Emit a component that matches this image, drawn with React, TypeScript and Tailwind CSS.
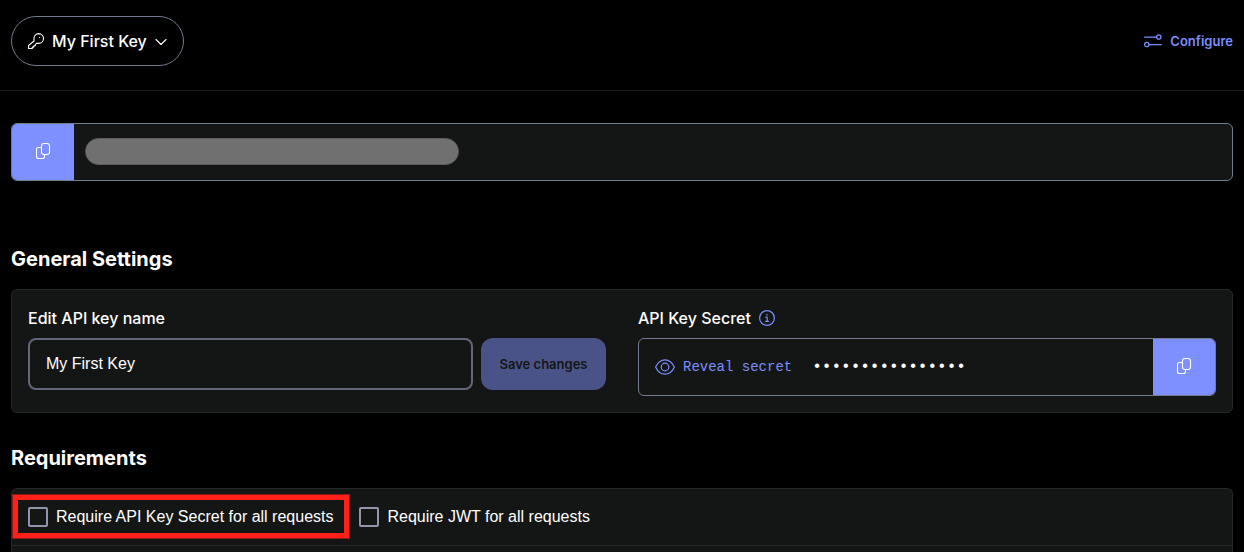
import { useState } from "react";
import type { ReactNode, SVGProps } from "react";

function Icon({ children, ...props }: SVGProps<SVGSVGElement>) {
  return (
    <svg fill="none" stroke="currentColor" strokeLinecap="round" strokeLinejoin="round" aria-hidden="true" {...props}>
      {children}
    </svg>
  );
}

function KeyIcon() {
  return (
    <Icon viewBox="0 0 16 16" className="size-4 shrink-0" strokeWidth="1.1">
      <path d="M6 8V5.600A4.900 4.900 0 0 1 10.700.6a4.900 4.900 0 0 1 4.800 4.900 4.900 4.900 0 0 1-4.800 4.900H8.500L7.300 11.700v1.100H5.800v1.300H4.300v1.400H.6v-3Z" />
      <circle cx="11.500" cy="4.500" r=".6" fill="currentColor" stroke="none" />
    </Icon>
  );
}

function ChevronIcon() {
  return (
    <Icon viewBox="0 0 12 16" className="h-4 w-3 shrink-0" strokeWidth="1.1">
      <path d="m1 6.500 5 5 5-5" />
    </Icon>
  );
}

function SlidersIcon() {
  return (
    <Icon viewBox="0 0 18 14" className="h-3.5 w-4.5 shrink-0" strokeWidth="1.25">
      <path d="M.6 3H12.500M5 10.500h12.400" />
      <circle cx="14.800" cy="3" r="2.200" />
      <circle cx="2.800" cy="10.500" r="2.200" />
    </Icon>
  );
}

function CopyIcon() {
  return (
    <Icon viewBox="0 0 16 18" className="h-4.5 w-4 shrink-0" strokeWidth="1.1">
      <rect x="6.500" y="1.500" width="8" height="11" rx="2.500" />
      <path d="M6.500 5.500H3.500a2 2 0 0 0-2 2v7a2 2 0 0 0 2 2H7.500a2 2 0 0 0 2-2v-2" />
    </Icon>
  );
}

function EyeIcon() {
  return (
    <Icon viewBox="0 0 20 16" className="h-4 w-5 shrink-0" strokeWidth="1.2">
      <path d="M.6 8C2.800 3.200 6 .8 10 .8S17.200 3.200 19.400 8c-2.200 4.800-5.400 7.200-9.400 7.200S2.800 12.800.6 8Z" />
      <circle cx="10" cy="8" r="3.800" />
    </Icon>
  );
}

function InfoIcon() {
  return (
    <Icon viewBox="0 0 16 16" className="size-4 shrink-0 text-[#7c8eff]" strokeWidth="1.2">
      <circle cx="8" cy="8" r="7.400" />
      <path d="M6.800 7.200h1.400v4M6.500 11.300h3.200" />
      <circle cx="8" cy="4.800" r=".8" fill="currentColor" stroke="none" />
    </Icon>
  );
}

function CopyButton({ label }: { label: string }) {
  return (
    <button type="button" aria-label={label} className="flex w-[62px] shrink-0 items-center justify-center bg-[#7e8fff] pb-0.5 text-white">
      <CopyIcon />
    </button>
  );
}

function SectionTitle({ children }: { children: ReactNode }) {
  return <h2 className="mb-4 text-xl leading-[27px] font-bold">{children}</h2>;
}

interface RequirementProps {
  label: string;
  highlighted?: boolean;
}

function Requirement({ label, highlighted }: RequirementProps) {
  const [checked, setChecked] = useState(false);

  return (
    <label className="relative flex items-center gap-2">
      <input
        type="checkbox"
        checked={checked}
        onChange={(e) => setChecked(e.target.checked)}
        className="size-5 appearance-none rounded-xs border-2 border-[#9095a9] checked:bg-[#7e8fff]"
      />
      {label}
      {highlighted && (
        <span className="pointer-events-none absolute -top-[10px] -right-4 -bottom-[9px] -left-[15px] border-5 border-[#ff2019] outline-1 outline-[#8a1a15]" />
      )}
    </label>
  );
}

export default function App() {
  const [name, setName] = useState("My First Key");

  return (
    <div className="flex min-h-screen flex-col bg-black font-[Inter,Arial,sans-serif] text-base leading-6 text-white">
      <header className="flex items-center justify-between border-b border-[#1b1b1f] px-[11px] pt-4 pb-6">
        <button type="button" className="flex h-[50px] items-center gap-2 rounded-full border border-[#737b8f] px-4 font-medium">
          <KeyIcon />
          My First Key
          <ChevronIcon />
        </button>
        <a href="#configure" className="flex items-center gap-2 text-[13px] font-semibold text-[#7c8eff]">
          <SlidersIcon />
          Configure
        </a>
      </header>

      <main className="flex grow flex-col px-[11px] pt-8">
        <div className="flex h-[58px] overflow-hidden rounded-md border border-[#737b8f] bg-[#141615]">
          <CopyButton label="Copy API key" />
          <div className="flex grow items-center px-[11px] pb-0.5">
            <div className="h-[27px] w-[374px] rounded-full border border-[#5b5b5b] bg-[#707070]" />
          </div>
        </div>

        <section className="pt-[65px]">
          <SectionTitle>General Settings</SectionTitle>
          <div className="grid grid-cols-2 gap-8 rounded-md border border-[#252829] bg-[#141615] p-4">
            <div>
              <label htmlFor="key-name" className="mb-2 block font-medium">
                Edit API key name
              </label>
              <div className="flex gap-2">
                <input
                  id="key-name"
                  value={name}
                  onChange={(e) => setName(e.target.value)}
                  className="h-[52px] min-w-0 grow rounded-lg border-2 border-[#626879] bg-transparent px-4 font-['Liberation_Sans',Arial,sans-serif] outline-none"
                />
                <button type="button" disabled className="w-[125px] shrink-0 rounded-xl bg-[#4a5387] text-[13px] font-semibold text-[#141615]">
                  Save changes
                </button>
              </div>
            </div>
            <div>
              <div className="mb-2 flex items-center gap-2 font-medium">
                API Key Secret
                <InfoIcon />
              </div>
              <div className="flex h-[58px] overflow-hidden rounded-md border border-[#737b8f]">
                <div className="flex min-w-0 grow items-center gap-5 px-4 font-['Liberation_Mono',monospace] text-sm">
                  <button type="button" className="flex items-center gap-2 text-[#7c8eff]">
                    <EyeIcon />
                    Reveal secret
                  </button>
                  <span className="text-base">••••••••••••••••</span>
                </div>
                <CopyButton label="Copy API key secret" />
              </div>
            </div>
          </div>
        </section>

        <section className="flex grow flex-col pt-8">
          <SectionTitle>Requirements</SectionTitle>
          <div className="grow rounded-t-md border border-b-0 border-[#252829] bg-[#141615]">
            <div className="flex h-[57px] items-center gap-[26px] border-b border-[#252829] px-4 font-['Liberation_Sans',Arial,sans-serif]">
              <Requirement label="Require API Key Secret for all requests" highlighted />
              <Requirement label="Require JWT for all requests" />
            </div>
          </div>
        </section>
      </main>
    </div>
  );
}
